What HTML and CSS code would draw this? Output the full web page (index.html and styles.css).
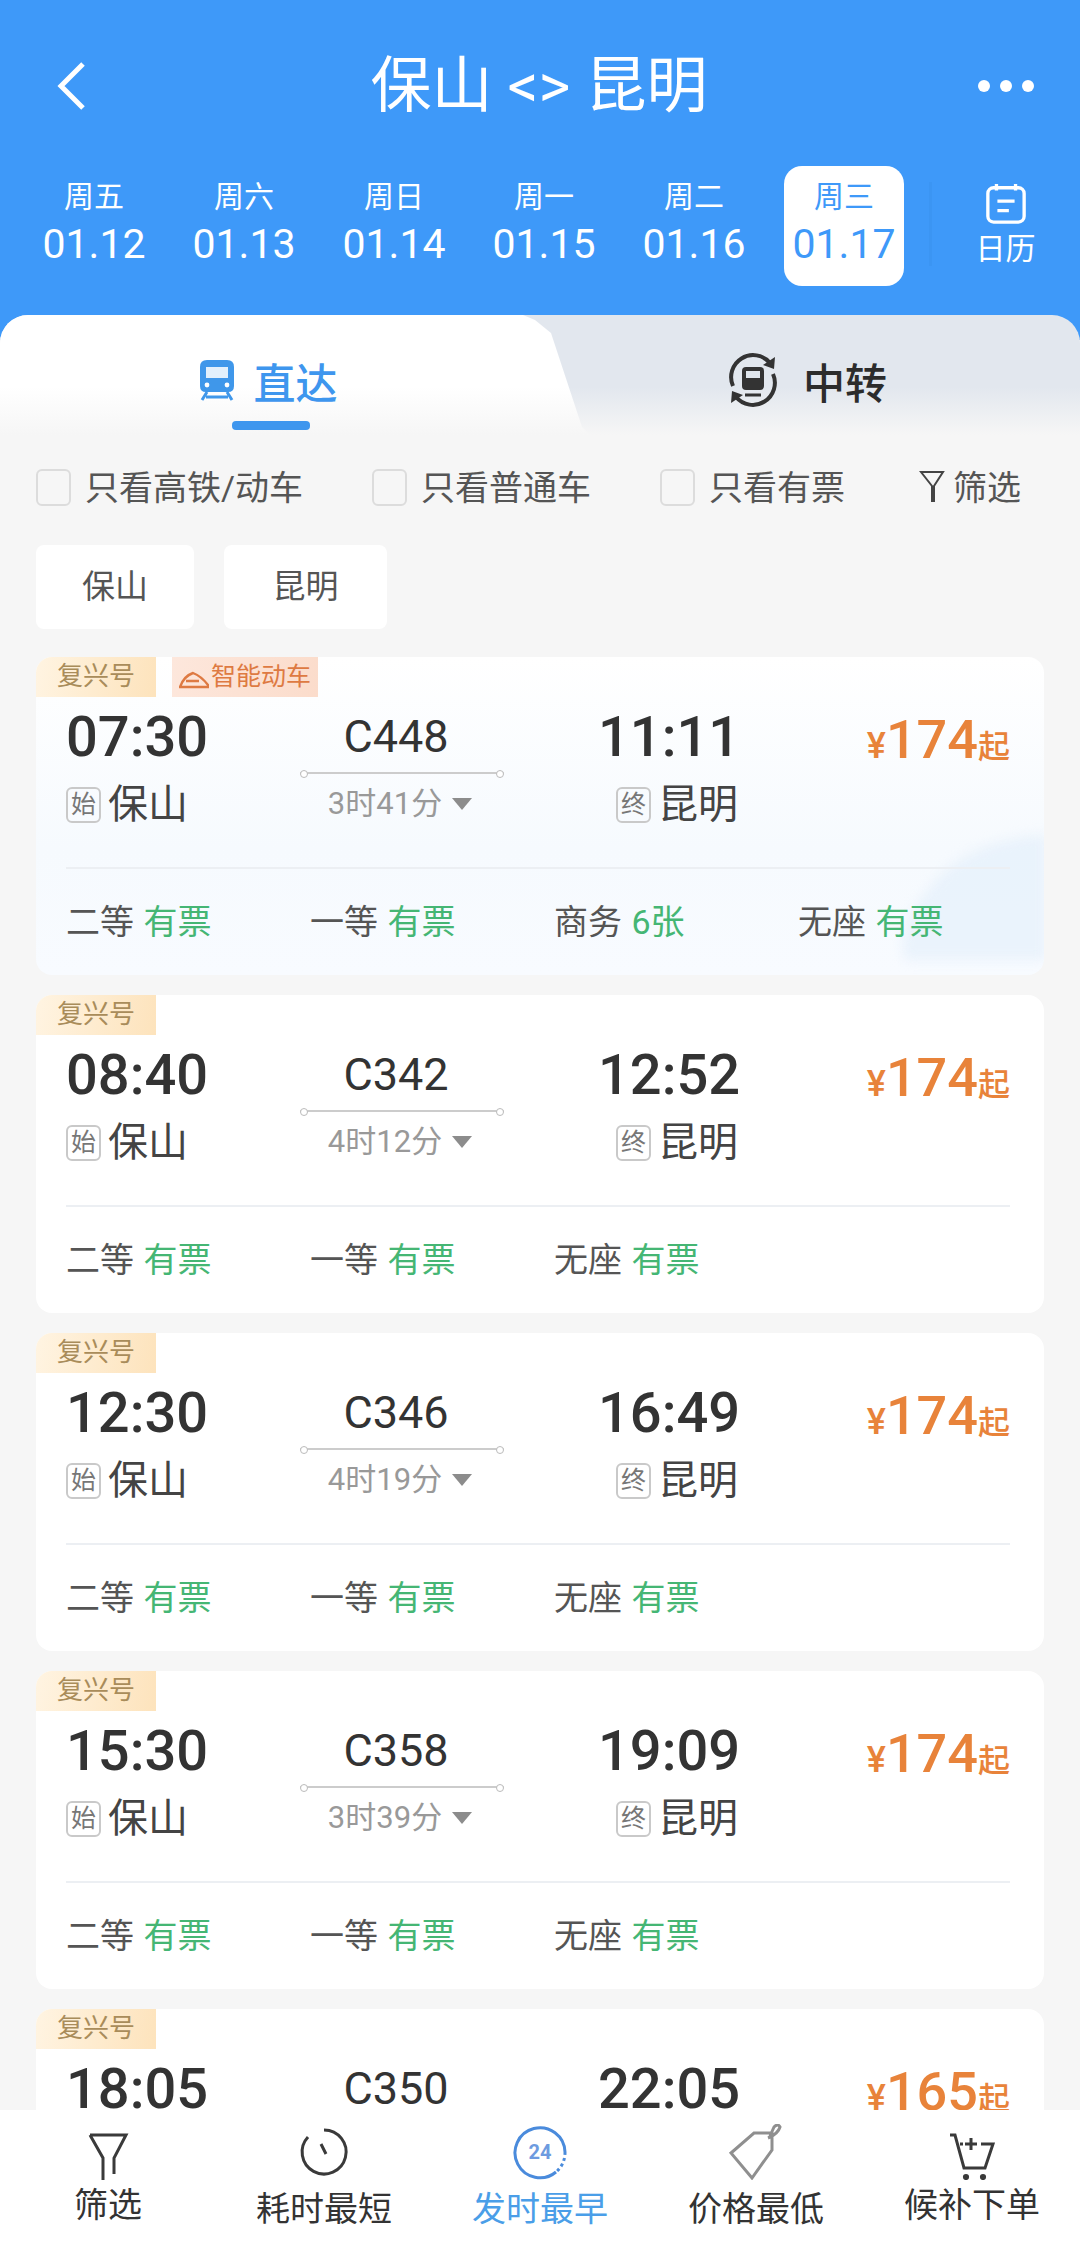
FILE: index.html
```html
<!DOCTYPE html>
<html>

<head>
  <title>保山 - 昆明</title>
  <link rel="stylesheet" href="styles.css">
</head>

<body>
  <div class="page">
    <div class="top">
      <div class="title-bar">
        <svg class="back-icon" viewBox="0 0 32 50"><path d="M27 3 L5 25 L27 47" /></svg>
        <div class="title">保山 &lt;&gt; 昆明</div>
        <div class="more"><span></span><span></span><span></span></div>
      </div>
      <div class="date-strip">
        <div class="date-col"><div class="week">周五</div><div class="day">01.12</div></div>
        <div class="date-col"><div class="week">周六</div><div class="day">01.13</div></div>
        <div class="date-col"><div class="week">周日</div><div class="day">01.14</div></div>
        <div class="date-col"><div class="week">周一</div><div class="day">01.15</div></div>
        <div class="date-col"><div class="week">周二</div><div class="day">01.16</div></div>
        <div class="date-col active"><div class="week">周三</div><div class="day">01.17</div></div>
        <div class="calendar">
          <svg viewBox="0 0 44 44" class="calendar-icon">
            <rect x="3" y="6" width="38" height="36" rx="6" />
            <path d="M12 2 V9 M32 2 V9 M13 20 H31 M13 30 H25" />
          </svg>
          <div class="calendar-text">日历</div>
        </div>
      </div>
    </div>

    <div class="tabs">
      <div class="tab tab-on">
        <svg class="train-icon" viewBox="0 0 38 42">
          <path d="M9 1 H29 Q36 1 36 8 V27 Q36 33 30 33 H8 Q2 33 2 27 V8 Q2 1 9 1 Z" fill="#3f97ea" />
          <rect x="8" y="8" width="22" height="11" fill="#fff" opacity="0.85" />
          <circle cx="9" cy="26" r="2.4" fill="#fff" /><circle cx="29" cy="26" r="2.4" fill="#fff" />
          <path d="M9 33 L4 41 M29 33 L34 41 M8 38 H30" stroke="#3f97ea" stroke-width="3" fill="none" />
        </svg>
        <span>直达</span>
        <div class="tab-line"></div>
      </div>
      <div class="tab tab-off">
        <svg class="swap-icon" viewBox="0 0 56 56">
          <path d="M8 34 A22 22 0 0 1 45 11 M48 22 A22 22 0 0 1 11 45" fill="none" stroke="#333" stroke-width="4" />
          <path d="M50 5 L49 17 L38 13 Z M6 51 L7 39 L18 43 Z" fill="#333" />
          <rect x="17" y="15" width="22" height="23" rx="4" fill="#333" />
          <rect x="21" y="19" width="14" height="7" fill="#dfe5ec" />
          <path d="M20 43 H36" stroke="#333" stroke-width="3" />
        </svg>
        <span>中转</span>
      </div>
    </div>

    <div class="filters">
      <div class="check"><i></i>只看高铁/动车</div>
      <div class="check"><i></i>只看普通车</div>
      <div class="check"><i></i>只看有票</div>
      <div class="filter-link">
        <svg viewBox="0 0 26 32" class="filter-small"><path d="M2 2 H24 L15 16 V31 H13 V16 Z" /></svg>筛选
      </div>
    </div>

    <div class="chips">
      <div class="chip">保山</div>
      <div class="chip">昆明</div>
    </div>

    <div class="list">
      <div class="card card-first">
        <svg class="watermark" viewBox="0 0 170 150"><path d="M190 0 Q90 5 45 70 Q10 110 20 150 H190 Z" fill="#e4effb" opacity="0.7" /></svg>
        <div class="tags">
          <div class="tag">复兴号</div>
          <div class="tag tag-smart">
            <svg class="tag-train" viewBox="0 0 30 18"><path d="M1 16 Q5 5 14 2 Q22 5 29 14 V16 Z M7 10 H20" fill="none" stroke="#de7a42" stroke-width="2.4" /></svg>智能动车
          </div>
        </div>
        <div class="main-row">
          <div class="time-col"><div class="time">07:30</div><div class="place"><b>始</b>保山</div></div>
          <div class="train-col"><div class="train-no">C448</div><div class="train-line"></div><div class="duration">3时41分<i></i></div></div>
          <div class="time-col arrive"><div class="time">11:11</div><div class="place"><b>终</b>昆明</div></div>
          <div class="price"><small>¥</small>174<em>起</em></div>
        </div>
        <div class="seats">
          <div class="seat">二等 <span>有票</span></div>
          <div class="seat">一等 <span>有票</span></div>
          <div class="seat">商务 <span>6张</span></div>
          <div class="seat">无座 <span>有票</span></div>
        </div>
      </div>

      <div class="card">
        <div class="tags"><div class="tag">复兴号</div></div>
        <div class="main-row">
          <div class="time-col"><div class="time">08:40</div><div class="place"><b>始</b>保山</div></div>
          <div class="train-col"><div class="train-no">C342</div><div class="train-line"></div><div class="duration">4时12分<i></i></div></div>
          <div class="time-col arrive"><div class="time">12:52</div><div class="place"><b>终</b>昆明</div></div>
          <div class="price"><small>¥</small>174<em>起</em></div>
        </div>
        <div class="seats">
          <div class="seat">二等 <span>有票</span></div>
          <div class="seat">一等 <span>有票</span></div>
          <div class="seat">无座 <span>有票</span></div>
        </div>
      </div>

      <div class="card">
        <div class="tags"><div class="tag">复兴号</div></div>
        <div class="main-row">
          <div class="time-col"><div class="time">12:30</div><div class="place"><b>始</b>保山</div></div>
          <div class="train-col"><div class="train-no">C346</div><div class="train-line"></div><div class="duration">4时19分<i></i></div></div>
          <div class="time-col arrive"><div class="time">16:49</div><div class="place"><b>终</b>昆明</div></div>
          <div class="price"><small>¥</small>174<em>起</em></div>
        </div>
        <div class="seats">
          <div class="seat">二等 <span>有票</span></div>
          <div class="seat">一等 <span>有票</span></div>
          <div class="seat">无座 <span>有票</span></div>
        </div>
      </div>

      <div class="card">
        <div class="tags"><div class="tag">复兴号</div></div>
        <div class="main-row">
          <div class="time-col"><div class="time">15:30</div><div class="place"><b>始</b>保山</div></div>
          <div class="train-col"><div class="train-no">C358</div><div class="train-line"></div><div class="duration">3时39分<i></i></div></div>
          <div class="time-col arrive"><div class="time">19:09</div><div class="place"><b>终</b>昆明</div></div>
          <div class="price"><small>¥</small>174<em>起</em></div>
        </div>
        <div class="seats">
          <div class="seat">二等 <span>有票</span></div>
          <div class="seat">一等 <span>有票</span></div>
          <div class="seat">无座 <span>有票</span></div>
        </div>
      </div>

      <div class="card">
        <div class="tags"><div class="tag">复兴号</div></div>
        <div class="main-row">
          <div class="time-col"><div class="time">18:05</div></div>
          <div class="train-col"><div class="train-no">C350</div></div>
          <div class="time-col arrive"><div class="time">22:05</div></div>
          <div class="price"><small>¥</small>165<em>起</em></div>
        </div>
      </div>
    </div>

    <div class="bottom-bar">
      <div class="bar-item">
        <svg viewBox="0 0 44 56" class="bar-icon"><path d="M4 11 H40 L28 34 V50 M4 11 L17 34 V56" /></svg>
        <div class="bar-text up">筛选</div>
      </div>
      <div class="bar-item">
        <svg viewBox="0 0 50 56" class="bar-icon"><path d="M25 6 A22 22 0 1 1 9 13 M22 20 L27 30" /></svg>
        <div class="bar-text">耗时最短</div>
      </div>
      <div class="bar-item on">
        <svg viewBox="0 0 56 56" class="bar-icon"><path d="M44 48 A25 25 0 1 1 53 28" /><path d="M53 28 A25 25 0 0 1 44 48" stroke-dasharray="3 3" /><text x="28" y="35" class="bar-24">24</text></svg>
        <div class="bar-text">发时最早</div>
      </div>
      <div class="bar-item">
        <svg viewBox="0 0 56 56" class="bar-icon grey"><path d="M3 29 L26 9 H44 L44 26 L24 54 Z M40 14 Q50 10 52 3 Q50 -1 46 3 L42 12" /></svg>
        <div class="bar-text">价格最低</div>
      </div>
      <div class="bar-item">
        <svg viewBox="0 0 50 56" class="bar-icon"><path d="M3 11 H8 L17 44 H38 L46 20 H34 M16 20 H13 M24 14 V26 M18 20 H30" /><circle cx="19" cy="53" r="1.6" /><circle cx="36" cy="53" r="1.6" /></svg>
        <div class="bar-text up">候补下单</div>
      </div>
    </div>
  </div>
</body>

</html>
```
FILE: styles.css
```css
* {
  box-sizing: border-box;
}

body {
  margin: 0;
  font-family: "Roboto", "Noto Sans CJK SC", sans-serif;
  color: #333;
}

.page {
  width: 1080px;
  height: 2248px;
  background-color: #f6f6f6;
  display: flex;
  flex-direction: column;
  overflow: hidden;
  position: relative;
}

.page > div {
  flex-shrink: 0;
}

/* blue header */
.top {
  height: 340px;
  margin-bottom: -25px;
  background-color: #3e99f9;
  color: #fff;
}

.title-bar {
  height: 166px;
  padding: 6px 46px 0 56px;
  display: flex;
  align-items: center;
  justify-content: space-between;
}

.back-icon {
  width: 32px;
  height: 50px;
  fill: none;
  stroke: #fff;
  stroke-width: 5;
}

.title {
  font-size: 61px;
  line-height: 70px;
  margin-left: 12px;
}

.more {
  display: flex;
  gap: 10px;
}

.more span {
  width: 12px;
  height: 12px;
  border-radius: 50%;
  background-color: #fff;
}

.date-strip {
  display: flex;
  padding-left: 34px;
  align-items: flex-start;
}

.date-col {
  width: 120px;
  height: 120px;
  margin-right: 30px;
  border-radius: 18px;
  text-align: center;
  padding-top: 10px;
}

.date-col.active {
  background-color: #fff;
  color: #3e99f9;
  margin-right: 0;
}

.week {
  font-size: 30px;
  line-height: 42px;
}

.day {
  font-size: 41px;
  line-height: 52px;
  white-space: nowrap;
}

.calendar {
  width: 120px;
  height: 84px;
  margin-top: 16px;
  margin-left: 25px;
  padding-left: 30px;
  text-align: center;
  border-left: 3px solid #3b95f3;
}

.calendar-icon {
  width: 42px;
  height: 42px;
  fill: none;
  stroke: #fff;
  stroke-width: 3.5;
  display: block;
  margin: 0 auto;
}

.calendar-text {
  font-size: 30px;
  line-height: 40px;
  margin-top: 5px;
}

/* tabs */
.tabs {
  height: 120px;
  display: flex;
  border-radius: 28px 28px 0 0;
  background: linear-gradient(#e2e7ee 60%, #f6f6f6);
  overflow: hidden;
  position: relative;
}

.tab {
  display: flex;
  align-items: center;
  justify-content: center;
  font-size: 42px;
  font-weight: 500;
  gap: 17px;
  padding-top: 10px;
  position: relative;
}

.tab-on {
  width: 590px;
  flex-shrink: 0;
  color: #3e96ee;
  background: linear-gradient(#fff 60%, #f6f6f6);
  clip-path: polygon(0 0, 523px 0, 535px 5px, 551px 18px, 582px 112px, 590px 100%, 0 100%);
  padding-right: 54px;
}

.tab-off {
  flex: 1;
  padding-right: 58px;
  color: #2c2c2c;
  gap: 22px;
}

.train-icon {
  width: 38px;
  height: 42px;
}

.swap-icon {
  width: 56px;
  height: 56px;
}

.tab-line {
  position: absolute;
  left: 232px;
  top: 106px;
  width: 78px;
  height: 9px;
  border-radius: 4px;
  background-color: #3e96ee;
}

/* filters */
.filters {
  height: 53px;
  margin-top: 24px;
  padding: 0 36px;
  display: flex;
  align-items: center;
  font-size: 34px;
  color: #555;
}

.check {
  display: flex;
  align-items: center;
  gap: 14px;
  width: 336px;
  white-space: nowrap;
}

.check i {
  width: 35px;
  height: 37px;
  margin-top: 3px;
  border: 2px solid #dcdcdc;
  border-radius: 6px;
}

.check:nth-child(2) {
  width: 288px;
}

.check:nth-child(3) {
  width: 259px;
}

.filter-link {
  display: flex;
  align-items: center;
  gap: 8px;
  white-space: nowrap;
}

.filter-small {
  width: 26px;
  height: 32px;
  fill: none;
  stroke: #444;
  stroke-width: 2;
}

/* stations */
.chips {
  display: flex;
  gap: 30px;
  padding: 33px 36px 0;
}

.chip {
  height: 84px;
  min-width: 158px;
  background-color: #fff;
  border-radius: 8px;
  display: flex;
  align-items: center;
  justify-content: center;
  font-size: 33px;
  color: #555;
  padding: 0 36px 6px;
}

.chip:nth-child(2) {
  min-width: 163px;
}

/* trains */
.list {
  padding: 28px 36px 0;
  display: flex;
  flex-direction: column;
  gap: 20px;
}

.card {
  height: 318px;
  flex-shrink: 0;
  background-color: #fff;
  border-radius: 16px;
  position: relative;
  overflow: hidden;
}

.card-first {
  background: linear-gradient(#fff, #f6fafe 60%, #f8fbff);
}

.watermark {
  position: absolute;
  right: 0;
  bottom: 15px;
  width: 170px;
  height: 125px;
  overflow: visible;
  filter: blur(6px);
}

.tags {
  display: flex;
  gap: 16px;
  height: 40px;
  position: relative;
}

.tag {
  width: 120px;
  height: 40px;
  line-height: 38px;
  text-align: center;
  font-size: 26px;
  color: #a98c5a;
  background: linear-gradient(100deg, #fff4e2, #fde3bc);
}

.tag-smart {
  width: 146px;
  font-size: 25px;
  color: #de7a42;
  background: linear-gradient(100deg, #fde7dc, #fbdccb);
  display: flex;
  align-items: center;
  justify-content: center;
  gap: 2px;
}

.tag-train {
  width: 30px;
  height: 18px;
  margin-top: 6px;
}

.main-row {
  display: flex;
  padding: 8px 34px 0 30px;
  position: relative;
}

.time-col {
  width: 234px;
  flex-shrink: 0;
}

.time-col.arrive {
  width: 210px;
}

.time {
  font-size: 56px;
  font-weight: 500;
  line-height: 64px;
  color: #333;
}

.place {
  display: flex;
  align-items: center;
  gap: 7px;
  font-size: 40px;
  line-height: 60px;
  margin-top: 6px;
  color: #444;
}

.arrive .place {
  margin-left: 18px;
}

.place b {
  font-weight: 400;
  font-size: 25px;
  width: 35px;
  height: 36px;
  line-height: 32px;
  text-align: center;
  border: 2px solid #c9c9c9;
  border-radius: 6px;
  color: #777;
}

.train-col {
  width: 298px;
  padding-right: 94px;
  text-align: center;
  flex-shrink: 0;
}

.train-no {
  font-size: 45px;
  line-height: 64px;
  color: #333;
  padding-right: 12px;
}

.train-line {
  height: 2px;
  margin-top: 3px;
  background-color: #ccc;
  position: relative;
}

.train-line::before,
.train-line::after {
  content: "";
  position: absolute;
  top: -2px;
  width: 6px;
  height: 6px;
  border: 1px solid #bbb;
  border-radius: 50%;
  background-color: #fff;
}

.train-line::before {
  left: 0;
}

.train-line::after {
  right: 0;
}

.duration {
  font-size: 31px;
  line-height: 40px;
  margin-top: 10px;
  color: #999;
  display: flex;
  align-items: center;
  justify-content: center;
  gap: 10px;
  padding-right: 4px;
}

.duration i {
  border-left: 10px solid transparent;
  border-right: 10px solid transparent;
  border-top: 12px solid #8c8c8c;
}

.price {
  flex: 1;
  text-align: right;
  font-size: 54px;
  font-weight: 500;
  line-height: 64px;
  color: #e8833a;
  white-space: nowrap;
  padding-top: 3px;
}

.price small {
  font-size: 36px;
}

.price em {
  font-style: normal;
  font-size: 32px;
}

.seats {
  margin: 32px 34px 0 30px;
  border-top: 2px solid #eceff3;
  display: flex;
  padding-top: 30px;
  font-size: 34px;
  line-height: 46px;
  color: #555;
  position: relative;
}

.seat {
  width: 244px;
  flex-shrink: 0;
  white-space: nowrap;
}

.seat span {
  color: #45b674;
  margin-left: 1px;
}

/* sort bar */
.bottom-bar {
  position: absolute;
  left: 0;
  bottom: 0;
  width: 100%;
  height: 138px;
  background-color: #fff;
  display: flex;
  padding-top: 14px;
}

.bar-item {
  width: 20%;
  text-align: center;
  color: #333;
}

.bar-icon {
  width: 56px;
  height: 56px;
  display: block;
  margin: 0 auto;
  fill: none;
  stroke: #3a3a3a;
  stroke-width: 3;
}

.bar-icon.grey {
  stroke: #8f8f8f;
}

.bar-text {
  font-size: 34px;
  line-height: 46px;
  margin-top: 6px;
}

.bar-text.up {
  margin-top: 2px;
}

.on {
  color: #4a9ee8;
}

.on .bar-icon {
  stroke: #4a8bdc;
}

.bar-24 {
  font-family: "Roboto", sans-serif;
  font-size: 20px;
  font-weight: 700;
  text-anchor: middle;
  fill: #6d9be0;
  stroke: none;
}
```
